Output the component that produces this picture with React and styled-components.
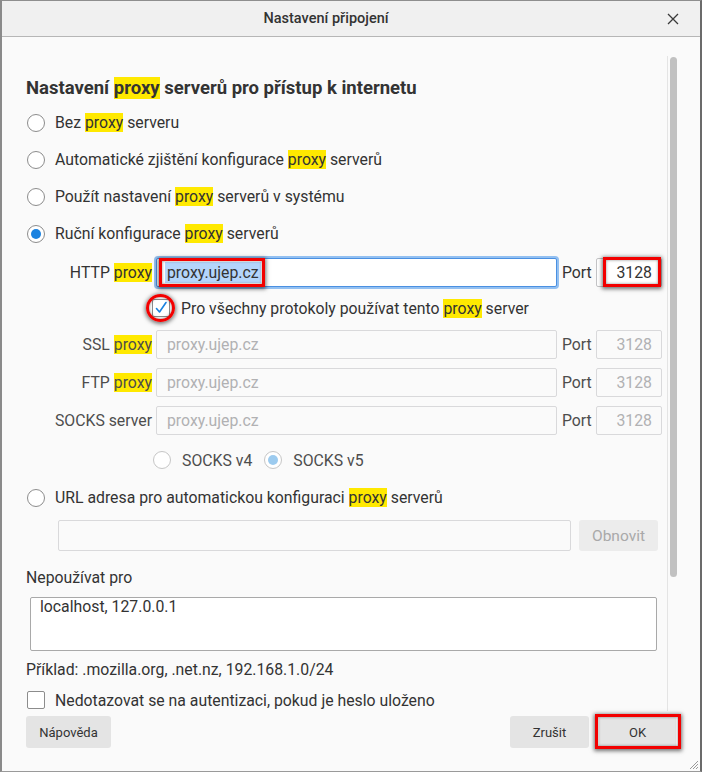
import React from "react";
import styled, { createGlobalStyle } from "styled-components";

const GlobalStyle = createGlobalStyle`
  html, body { margin: 0; padding: 0; background: #ffffff; }
  * { box-sizing: border-box; }
  body {
    font-family: Roboto, "Liberation Sans", Arial, sans-serif;
    color: #333333;
    -webkit-font-smoothing: antialiased;
  }
`;

const FS = 15.8;

const Window = styled.div`
  position: relative;
  width: 702px;
  height: 772px;
  background: #fafafa;
  border-top: 1px solid #8e8e8e;
  border-left: 2px solid #8a8a8a;
  border-right: 2px solid #6b6b6b;
  border-bottom: 1px solid #9a9a9a;
  display: flex;
  flex-direction: column;
  overflow: hidden;
`;

const TitleBar = styled.div`
  flex: none;
  height: 36px;
  background: #f0f0f0;
  border-bottom: 1px solid #b6b6b6;
  display: flex;
  align-items: center;
`;

const Title = styled.div`
  flex: none;
  width: 648px;
  text-align: center;
  font-size: 14.5px;
  font-weight: 500;
  color: #333;
`;

const CloseBtn = styled.div`
  flex: none;
  width: 45px;
  height: 100%;
  display: flex;
  align-items: center;
  justify-content: center;
`;

const Body = styled.div`
  flex: none;
  margin-top: 19px;
  height: 655px;
  display: flex;
`;

const Scroller = styled.div`
  flex: none;
  width: 665px;
  padding: 21px 0 0 24px;
  display: flex;
  flex-direction: column;
`;

const ScrollTrack = styled.div`
  flex: 1;
  border-left: 1px solid #e4e4e4;
  padding: 1px 0 0 2px;
`;

const Thumb = styled.div`
  width: 7px;
  height: 520px;
  border-radius: 4px;
  background: #c1c1c1;
`;

const Heading = styled.h1`
  margin: 0 0 5px 0;
  font-size: 18.5px;
  line-height: 22px;
  font-weight: 700;
  color: #333;
  white-space: nowrap;
`;

const Hl = styled.span`
  background: #ffe900;
`;

const Text = styled.span`
  font-size: ${FS}px;
  color: ${(p) => p.$color || "#333"};
  white-space: nowrap;
`;

const RadioRow = styled.div`
  height: ${(p) => p.$h || 37}px;
  margin-top: ${(p) => p.$mt || 0}px;
  padding-left: 1px;
  display: flex;
  align-items: center;
  gap: 10px;
`;

const RadioCircle = styled.span`
  flex: none;
  width: 18px;
  height: 18px;
  border-radius: 50%;
  border: 1px solid ${(p) => (p.$disabled ? "#c6c6c6" : "#8c8c8c")};
  background: #fff;
  display: flex;
  align-items: center;
  justify-content: center;
  &::after {
    content: "";
    display: ${(p) => (p.$checked ? "block" : "none")};
    width: 10px;
    height: 10px;
    border-radius: 50%;
    background: ${(p) => (p.$disabled ? "#9ccbef" : "#1a82e0")};
  }
`;

const FieldRow = styled.div`
  height: 29px;
  margin-top: ${(p) => p.$mt || 0}px;
  display: flex;
  align-items: center;
`;

const FieldLabel = styled.span`
  flex: none;
  width: 126px;
  margin-right: 4px;
  text-align: right;
  font-size: ${FS}px;
  color: ${(p) => p.$color || "#333"};
  white-space: nowrap;
`;

const InputBox = styled.div`
  position: relative;
  flex: none;
  width: ${(p) => p.$w}px;
  height: ${(p) => p.$h || 29}px;
  margin-left: ${(p) => p.$ml || 0}px;
  border: 1px solid ${(p) => (p.$focused ? "#4a90e2" : p.$disabled ? "#d9d9db" : "#c4c4c6")};
  box-shadow: ${(p) => (p.$focused ? "0 0 0 2px #93c0f1" : "none")};
  border-radius: 2px;
  background: ${(p) => (p.$disabled ? "#fafafa" : "#ffffff")};
  display: flex;
  align-items: center;
  justify-content: ${(p) => (p.$right ? "flex-end" : "flex-start")};
  padding: ${(p) => (p.$right ? "0 9px 0 0" : "0 0 0 10px")};
  font-size: ${FS}px;
  color: ${(p) => (p.$disabled ? "#b1b1b3" : "#333")};
`;

const Selection = styled.span`
  background: #b4d5fb;
  padding: 1px 2px;
  margin-left: -2px;
`;

const PortLabel = styled.span`
  flex: none;
  width: 39px;
  padding-left: 5px;
  font-size: ${FS}px;
  color: ${(p) => p.$color || "#333"};
`;

const RedBox = styled.span`
  position: absolute;
  left: ${(p) => p.$l}px;
  top: ${(p) => p.$t}px;
  width: ${(p) => p.$w}px;
  height: ${(p) => p.$h}px;
  border: 3px solid #f20000;
  border-radius: ${(p) => (p.$round ? "50%" : "0")};
  box-shadow: 0 1px 4px 1px rgba(0, 0, 0, 0.55), inset 0 0 3px rgba(0, 0, 0, 0.45);
  pointer-events: none;
`;

const CheckRow = styled.div`
  height: ${(p) => p.$h || 26}px;
  margin-top: ${(p) => p.$mt || 0}px;
  padding-left: ${(p) => p.$pl || 0}px;
  display: flex;
  align-items: center;
  gap: ${(p) => p.$gap || 10}px;
`;

const CheckBox = styled.span`
  position: relative;
  flex: none;
  width: 18px;
  height: 18px;
  border: 1px solid #8c8c8c;
  border-radius: 2px;
  background: #fff;
  display: flex;
  align-items: center;
  justify-content: center;
`;

const SocksRow = styled.div`
  height: 26px;
  margin-top: 12px;
  padding-left: 127px;
  display: flex;
  align-items: center;
`;

const SocksOption = styled.div`
  display: flex;
  align-items: center;
  gap: 11px;
  margin-right: ${(p) => p.$mr || 0}px;
`;

const UrlRow = styled.div`
  margin-top: 4px;
  margin-left: 32px;
  display: flex;
  gap: 8px;
`;

const GreyButton = styled.div`
  flex: none;
  width: ${(p) => p.$w}px;
  height: ${(p) => p.$h || 32}px;
  border-radius: 3px;
  background: ${(p) => (p.$disabled ? "#ececec" : "#e4e4e4")};
  color: ${(p) => (p.$disabled ? "#a9a9a9" : "#333")};
  font-size: ${(p) => p.$fs || 13}px;
  display: flex;
  align-items: center;
  justify-content: center;
  position: relative;
`;

const SectionLabel = styled.div`
  margin-top: ${(p) => p.$mt}px;
  height: 18px;
  line-height: 18px;
  font-size: ${FS}px;
  color: #333;
  white-space: nowrap;
`;

const TextArea = styled.div`
  margin-top: 10px;
  margin-left: 4px;
  width: 627px;
  height: 54px;
  border: 1px solid #a9a9a9;
  border-radius: 2px;
  background: #fff;
  padding: 0 9px;
  font-size: ${FS}px;
  line-height: 18px;
  color: #333;
`;

const Footer = styled.div`
  flex: 1;
  padding: 5px 24px 0 24px;
  display: flex;
  gap: 10px;
`;

const Spacer = styled.div`
  flex: 1;
`;

const Grip = styled.svg`
  position: absolute;
  right: 1px;
  bottom: 1px;
`;

const Radio = ({ checked, disabled }) => <RadioCircle $checked={checked} $disabled={disabled} />;

export default function App() {
  return (
    <>
      <GlobalStyle />
      <Window>
        <TitleBar>
          <Title>Nastavení připojení</Title>
          <CloseBtn>
            <svg width="12" height="12" viewBox="0 0 12 12">
              <path d="M1 1 L11 11 M11 1 L1 11" stroke="#3a3a3a" strokeWidth="1.3" fill="none" />
            </svg>
          </CloseBtn>
        </TitleBar>
        <Body>
          <Scroller>
            <Heading>
              Nastavení <Hl>proxy</Hl> serverů pro přístup k internetu
            </Heading>
            <RadioRow>
              <Radio />
              <Text>
                Bez <Hl>proxy</Hl> serveru
              </Text>
            </RadioRow>
            <RadioRow>
              <Radio />
              <Text>
                Automatické zjištění konfigurace <Hl>proxy</Hl> serverů
              </Text>
            </RadioRow>
            <RadioRow>
              <Radio />
              <Text>
                Použít nastavení <Hl>proxy</Hl> serverů v systému
              </Text>
            </RadioRow>
            <RadioRow>
              <Radio checked />
              <Text>
                Ruční konfigurace <Hl>proxy</Hl> serverů
              </Text>
            </RadioRow>

            <FieldRow $mt={6}>
              <FieldLabel>
                HTTP <Hl>proxy</Hl>
              </FieldLabel>
              <InputBox $w={401} $focused>
                <Selection>proxy.ujep.cz</Selection>
                <RedBox $l={2} $t={-1} $w={106} $h={29} />
              </InputBox>
              <PortLabel>Port</PortLabel>
              <InputBox $w={66} $right>
                3128
                <RedBox $l={6} $t={-2} $w={58} $h={30} />
              </InputBox>
            </FieldRow>

            <CheckRow $mt={8} $pl={126} $gap={11}>
              <CheckBox>
                <svg width="16" height="16" viewBox="0 0 16 16">
                  <path d="M3.5 8.5 L6.5 12 L13 2.5" stroke="#1a82e0" strokeWidth="1.6" fill="none" strokeLinecap="round" strokeLinejoin="round" />
                </svg>
                <RedBox $round $l={-7} $t={-6} $w={29} $h={28} />
              </CheckBox>
              <Text>
                Pro všechny protokoly používat tento <Hl>proxy</Hl> server
              </Text>
            </CheckRow>

            <FieldRow $mt={9}>
              <FieldLabel $color="#4d4d4d">
                SSL <Hl>proxy</Hl>
              </FieldLabel>
              <InputBox $w={401} $disabled>proxy.ujep.cz</InputBox>
              <PortLabel $color="#4d4d4d">Port</PortLabel>
              <InputBox $w={66} $right $disabled>3128</InputBox>
            </FieldRow>
            <FieldRow $mt={9}>
              <FieldLabel $color="#4d4d4d">
                FTP <Hl>proxy</Hl>
              </FieldLabel>
              <InputBox $w={401} $disabled>proxy.ujep.cz</InputBox>
              <PortLabel $color="#4d4d4d">Port</PortLabel>
              <InputBox $w={66} $right $disabled>3128</InputBox>
            </FieldRow>
            <FieldRow $mt={9}>
              <FieldLabel $color="#4d4d4d">SOCKS server</FieldLabel>
              <InputBox $w={401} $disabled>proxy.ujep.cz</InputBox>
              <PortLabel $color="#4d4d4d">Port</PortLabel>
              <InputBox $w={66} $right $disabled>3128</InputBox>
            </FieldRow>

            <SocksRow>
              <SocksOption $mr={12}>
                <Radio disabled />
                <Text $color="#4d4d4d">SOCKS v4</Text>
              </SocksOption>
              <SocksOption>
                <Radio checked disabled />
                <Text $color="#4d4d4d">SOCKS v5</Text>
              </SocksOption>
            </SocksRow>

            <RadioRow $mt={6}>
              <Radio />
              <Text>
                URL adresa pro automatickou konfiguraci <Hl>proxy</Hl> serverů
              </Text>
            </RadioRow>
            <UrlRow>
              <InputBox $w={513} $h={31} $disabled />
              <GreyButton $w={79} $h={31} $fs={15.5} $disabled>
                Obnovit
              </GreyButton>
            </UrlRow>

            <SectionLabel $mt={18}>Nepoužívat pro</SectionLabel>
            <TextArea>localhost, 127.0.0.1</TextArea>
            <SectionLabel $mt={10}>Příklad: .mozilla.org, .net.nz, 192.168.1.0/24</SectionLabel>

            <CheckRow $mt={12} $h={18} $pl={1}>
              <CheckBox />
              <Text>Nedotazovat se na autentizaci, pokud je heslo uloženo</Text>
            </CheckRow>
          </Scroller>
          <ScrollTrack>
            <Thumb />
          </ScrollTrack>
        </Body>
        <Footer>
          <GreyButton $w={85}>Nápověda</GreyButton>
          <Spacer />
          <GreyButton $w={79}>Zrušit</GreyButton>
          <GreyButton $w={77}>
            OK
            <RedBox $l={-4} $t={-2} $w={86} $h={35} />
          </GreyButton>
        </Footer>
        <Grip width="12" height="12" viewBox="0 0 12 12">
          <path d="M11 3 L3 11 M11 6 L6 11 M11 9 L9 11" stroke="#9a9a9a" strokeWidth="1" fill="none" />
        </Grip>
      </Window>
    </>
  );
}
